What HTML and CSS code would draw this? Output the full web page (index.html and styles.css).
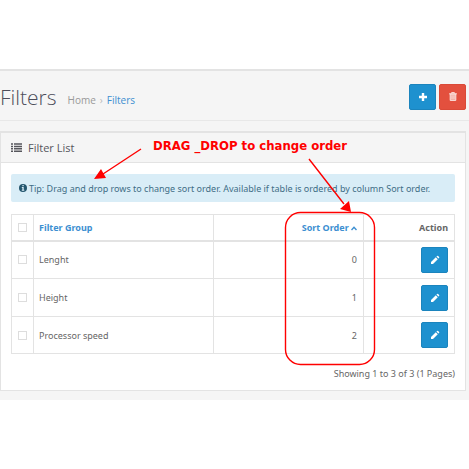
FILE: index.html
```
<!DOCTYPE html>
<html lang="en">
<head>
    <meta charset="UTF-8">
    <meta name="viewport" content="width=device-width, initial-scale=1.0">
    <title>Filters</title>
    <link rel="stylesheet" href="styles.css">
</head>
<body>
    <svg class="icon-defs" aria-hidden="true">
        <symbol id="icon-pencil" viewBox="0 0 10 10">
            <path fill="currentColor" d="M1 7l4.8-4.8 2 2L3 9H1zM6.4 1.6l.7-.7q.5-.4 1 0l1 1q.4.5 0 1l-.7.7z"/>
        </symbol>
    </svg>

    <div id="content">
        <div class="page-header">
            <h1>Filters</h1>
            <ul class="breadcrumb">
                <li><a href="#">Home</a></li>
                <li><a href="#" class="current">Filters</a></li>
            </ul>
            <div class="header-buttons">
                <button type="button" class="btn btn-primary" aria-label="Add New">
                    <svg width="8" height="8" viewBox="0 0 8 8"><path d="M4 0v8M0 4h8" stroke="#fff" stroke-width="2.4"/></svg>
                </button>
                <button type="button" class="btn btn-danger" aria-label="Delete">
                    <svg width="8" height="9" viewBox="0 0 8 9" fill="none" stroke="#fbe3df"><path fill="#f0a89d" d="M1.2 2v6.4h5.6V2z"/><path d="M0 1.8h8M2.6 1.5V.5h2.8v1M3 3.2v4M5 3.2v4" stroke-width=".9"/></svg>
                </button>
            </div>
        </div>

        <div class="panel">
            <div class="panel-heading">
                <svg width="11" height="9" viewBox="0 0 11 9"><path d="M0 1h2M3 1h8M0 3.4h2M3 3.4h8M0 5.8h2M3 5.8h8M0 8.2h2M3 8.2h8" stroke="#56565c" stroke-width="1.5"/></svg>
                <h3>Filter List</h3>
            </div>
            <div class="panel-body">
                <div class="alert">
                    <svg width="8" height="8" viewBox="0 0 8 8"><circle cx="4" cy="4" r="4" fill="#24566e"/><path d="M3.4 1h1.3v1.2H3.4zM2.8 3h1.9v2.8h.6v.9H2.8v-.9h.6V3.9h-.6z" fill="#d9edf7"/></svg>
                    <span>Tip: Drag and drop rows to change sort order. Available if table is ordered by column Sort order.</span>
                </div>

                <div class="table-wrap">
                    <table>
                        <thead>
                            <tr>
                                <th class="col-check"><input type="checkbox" aria-label="Select all"></th>
                                <th><a href="#">Filter Group</a></th>
                                <th class="col-order"><a href="#">Sort Order <svg width="6" height="5" viewBox="0 0 6 5"><path d="M.5 4L3 1.3 5.5 4" fill="none" stroke="currentColor" stroke-width="1.4"/></svg></a></th>
                                <th class="col-action">Action</th>
                            </tr>
                        </thead>
                        <tbody>
                            <tr>
                                <td class="col-check"><input type="checkbox" aria-label="Select Lenght"></td>
                                <td>Lenght</td>
                                <td class="col-order">0</td>
                                <td class="col-action"><button type="button" class="btn btn-primary" aria-label="Edit Lenght"><svg width="10" height="10"><use href="#icon-pencil"/></svg></button></td>
                            </tr>
                            <tr>
                                <td class="col-check"><input type="checkbox" aria-label="Select Height"></td>
                                <td>Height</td>
                                <td class="col-order">1</td>
                                <td class="col-action"><button type="button" class="btn btn-primary" aria-label="Edit Height"><svg width="10" height="10"><use href="#icon-pencil"/></svg></button></td>
                            </tr>
                            <tr>
                                <td class="col-check"><input type="checkbox" aria-label="Select Processor speed"></td>
                                <td>Processor speed</td>
                                <td class="col-order">2</td>
                                <td class="col-action"><button type="button" class="btn btn-primary" aria-label="Edit Processor speed"><svg width="10" height="10"><use href="#icon-pencil"/></svg></button></td>
                            </tr>
                        </tbody>
                    </table>
                </div>

                <div class="results">Showing 1 to 3 of 3 (1 Pages)</div>
            </div>
        </div>
    </div>

    <!-- Callout drawn over the page -->
    <svg class="callout" width="469" height="469" viewBox="0 0 469 469" aria-hidden="true">
        <g fill="none" stroke="#f00" stroke-width="1.4">
            <path d="M141 149l-38 25M309 159l35 45"/>
            <rect x="285.5" y="212.5" width="89" height="152" rx="15"/>
        </g>
        <path fill="#f00" d="M94 179l7-10 5 9zM351 212l-11-3 9-8z"/>
    </svg>
    <div class="callout-text">DRAG _DROP to change order</div>
</body>
</html>
```

FILE: styles.css
```
:root {
    --page-bg: #f5f5f5;
    --border: #e3e3e3;
    --text: #666;
    --link: #3d8fd1;
    --primary: #1e91cf;
    --danger: #e3503e;
}

* { box-sizing: border-box; }

body {
    position: relative;
    margin: 0;
    padding-top: 69px;
    background: #fff;
    color: var(--text);
    font-family: "Noto Sans", "Open Sans", sans-serif;
    font-size: 9px;
    line-height: 13px;
}

a { color: var(--link); text-decoration: none; }

.icon-defs { position: absolute; width: 0; height: 0; }

#content {
    background: var(--page-bg);
    border-top: 2px solid var(--border);
    padding-bottom: 9px;
}

/* Title, breadcrumb and buttons */
.page-header {
    display: flex;
    align-items: center;
    height: 50px;
    padding: 2px 3px 0 0;
    border-bottom: 1px solid #e8e8e8;
    margin-bottom: 10px;
    font-family: "Open Sans", sans-serif;
}
h1 {
    margin: 0;
    color: #4c4d5a;
    font-size: 21px;
    font-weight: 300;
    line-height: 30px;
}
.breadcrumb {
    display: flex;
    list-style: none;
    margin: 8px 0 0 11px;
    padding: 0;
    font-size: 10px;
}
.breadcrumb a { color: #999; }
.breadcrumb .current { color: var(--link); }
.breadcrumb li + li::before { content: "›"; color: #bbb; padding: 0 4px; }
.header-buttons { display: flex; gap: 3px; margin-left: auto; }

.btn {
    display: inline-flex;
    align-items: center;
    justify-content: center;
    width: 27px;
    height: 26px;
    padding: 0;
    border: 1px solid;
    border-radius: 2px;
    color: #fff;
    vertical-align: top;
    cursor: pointer;
}
.btn-primary { background: var(--primary); border-color: #1b84bd; }
.btn-danger { background: var(--danger); border-color: #da4a38; }

.panel {
    margin-right: 3px;
    background: #fff;
    border: 1px solid var(--border);
    border-top-width: 2px;
}
.panel-heading {
    display: flex;
    align-items: center;
    gap: 6px;
    height: 30px;
    padding: 0 10px;
    background: var(--page-bg);
    border-bottom: 1px solid var(--border);
}
h3 {
    margin: 0;
    color: #56565c;
    font-family: "Open Sans", sans-serif;
    font-size: 11px;
    font-weight: 400;
}
.panel-body { padding: 11px 10px 10px; }

.alert {
    display: flex;
    align-items: center;
    gap: 2px;
    min-height: 28px;
    padding: 0 8px;
    margin-bottom: 12px;
    background: #d9edf7;
    border-radius: 2px;
    color: #3f6e86;
    white-space: nowrap;
}

table {
    width: 100%;
    table-layout: fixed;
    border-collapse: collapse;
}
th, td {
    height: 38px;
    padding: 0 6px 0 5px;
    border: 1px solid var(--border);
    text-align: left;
}
th { height: 26px; font-weight: 700; }
tbody tr:last-child td { height: 37px; }
thead tr { border-bottom: 2px solid var(--border); }
.col-check { width: 22px; padding: 0 0 2px; text-align: center; }
.col-order { width: 150px; text-align: right; }
.col-action { width: 91px; text-align: right; }

input[type="checkbox"] {
    appearance: none;
    width: 9px;
    height: 9px;
    margin: 0;
    border: 1px solid #ddd;
    background: #fff;
    vertical-align: middle;
}

.results { margin-top: 13px; text-align: right; }

.callout { position: absolute; top: 0; left: 0; pointer-events: none; }
.callout-text {
    position: absolute;
    top: 138px;
    left: 153px;
    color: #f00;
    font-family: "DejaVu Sans Condensed", "DejaVu Sans", sans-serif;
    font-size: 13px;
    font-weight: 700;
    line-height: 16px;
    white-space: nowrap;
}
```
